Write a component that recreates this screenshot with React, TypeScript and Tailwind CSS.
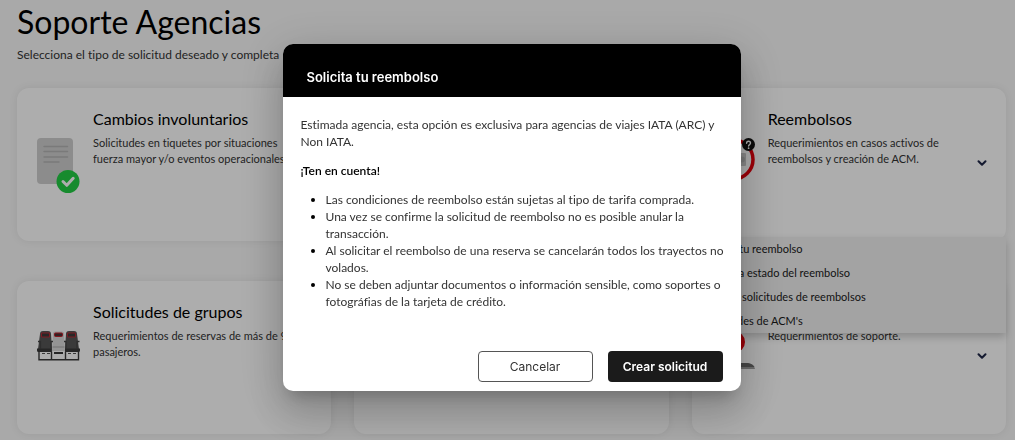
import type { ReactNode } from 'react'
import { ChevronDown } from 'lucide-react'

interface SupportCard {
  id: string
  title?: string
  text?: string
  icon?: ReactNode
  options?: string[]
  expandable?: boolean
}

function DocumentIcon() {
  return (
    <svg width="43" height="56" viewBox="0 0 43 56" fill="none" aria-hidden="true">
      <rect x="0" y="0" width="36" height="46" rx="4" fill="#cfcfcf" />
      <path
        d="M7 8.5h23.5M7 13.5h23.5M7 19h23.5M7 24h15"
        stroke="#b4b4b4"
        strokeWidth="1.5"
        strokeLinecap="round"
      />
      <circle cx="31" cy="43.5" r="11.5" fill="#23cd45" />
      <path
        d="M26 43.5l3.8 3.8 6.4-7"
        stroke="#fff"
        strokeWidth="3"
        strokeLinecap="round"
        strokeLinejoin="round"
      />
    </svg>
  )
}

function SeatsIcon() {
  return (
    <svg width="43" height="30" viewBox="0 0 43 30" fill="none" aria-hidden="true">
      <path d="M16 2.5Q16 .5 18 .5h7q2 0 2 2L28 20H15z" fill="#dadada" />
      <rect x="17.5" y="2" width="8" height="3.5" rx="1" fill="#4a3034" stroke="#c8202c" />
      <path d="M15.5 16h12" stroke="#a8a8a8" />
      <path
        d="M3 3Q3 0 6 0h5q3 0 3 3l1 15v3H1v-3zM29 3q0-3 3-3h5q3 0 3 3l2 15v3H28v-3z"
        fill="#565656"
      />
      <path
        d="M4.500 2v4h8V2zM30.500 2v4h8V2z"
        fill="#3c3c3c"
        stroke="#b82a34"
        strokeLinejoin="round"
      />
      <path
        d="M1 10.500h2.500v7M16 10.500h-2v7M27 10.500h2v7M42.500 10.500H40v7"
        stroke="#444"
        strokeWidth="1.300"
      />
      <path d="M0 17.500h14.500v3.500H1.500Q0 21 0 19.500zM28 17.500h15v2q0 1.500-1.500 1.500H28z" fill="#383838" />
      <path d="M17 22h9" stroke="#222" strokeWidth="1.800" />
      <path d="M5 22.500h8M31 22.500h8" stroke="#555" strokeDasharray="3 2" />
      <path d="M2 20.500v8.300h39.500v-8.300M14.500 20.500v8.300M28.500 20.500v8.300" stroke="#3a3a3a" strokeWidth="1.400" />
    </svg>
  )
}

function RefundIcon() {
  return (
    <svg width="43" height="44" viewBox="0 0 43 44" fill="none" aria-hidden="true">
      <circle cx="21.500" cy="21.500" r="19.500" stroke="#e8000c" strokeWidth="3.500" />
      <rect x="9" y="15" width="25" height="13" rx="1" fill="#c9c9c9" />
      <circle cx="30" cy="21.500" r="3" fill="#b4b4b4" />
      <circle cx="36.500" cy="6.500" r="6.500" fill="#111" />
      <path
        d="M34.600 5.200c0-2.600 3.900-2.500 3.900-.1 0 1.500-1.900 1.500-1.900 3"
        stroke="#fff"
        strokeWidth="1.400"
        strokeLinecap="round"
      />
      <circle cx="36.600" cy="10.200" r=".9" fill="#fff" />
    </svg>
  )
}

function MonitorIcon() {
  return (
    <svg width="43" height="38" viewBox="0 0 43 38" fill="none" aria-hidden="true">
      <circle cx="22.500" cy="11" r="10.500" fill="#e8000c" />
      <path d="M3 32h33q6 1 7 6H0q0-5 3-6z" fill="#a0a0a0" />
      <path d="M3 32h33q5 1 6.500 4H1q0-3 2-4z" fill="#6a6a6a" />
    </svg>
  )
}

const cards: SupportCard[] = [
  {
    id: 'cambios',
    title: 'Cambios involuntarios',
    text: 'Solicitudes en tiquetes por situaciones\nfuerza mayor y/o eventos operacionales.',
    icon: <DocumentIcon />,
  },
  { id: 'empty-top' },
  {
    id: 'reembolsos',
    title: 'Reembolsos',
    text: 'Requerimientos en casos activos de\nreembolsos y creación de ACM.',
    icon: <RefundIcon />,
    expandable: true,
    options: [
      'Solicita tu reembolso',
      'Consulta estado del reembolso',
      'Gestión solicitudes de reembolsos',
      "Solicitudes de ACM's",
    ],
  },
  {
    id: 'grupos',
    title: 'Solicitudes de grupos',
    text: 'Requerimientos de reservas de más de 9\npasajeros.',
    icon: <SeatsIcon />,
  },
  { id: 'empty-bottom' },
  {
    id: 'soporte',
    text: 'Requerimientos de soporte.',
    icon: <MonitorIcon />,
    expandable: true,
  },
]

const conditions = [
  'Las condiciones de reembolso están sujetas al tipo de tarifa comprada.',
  'Una vez se confirme la solicitud de reembolso no es posible anular la transacción.',
  'Al solicitar el reembolso de una reserva se cancelarán todos los trayectos no volados.',
  'No se deben adjuntar documentos o información sensible, como soportes o fotográfias de la tarjeta de crédito.',
]

function Card({ card }: { card: SupportCard }) {
  return (
    <section className="relative flex min-h-[153px] rounded-xl bg-white px-5 shadow-[0_0_8px_rgba(0,0,0,0.08)]">
      {card.icon && <div className="w-[43px] shrink-0 pt-[50px]">{card.icon}</div>}
      {card.text && (
        <div className="ml-[13px] pt-[19px] whitespace-nowrap">
          <h2 className="h-6 text-[16px] leading-6 text-black">{card.title}</h2>
          <p className="mt-1 text-[11px] leading-4 whitespace-pre text-[#333]">{card.text}</p>
        </div>
      )}
      {card.expandable && (
        <button
          type="button"
          aria-label="Ver opciones"
          className="-mr-[3px] ml-auto self-center pb-1 text-[#1f2747]"
        >
          <ChevronDown size={14} strokeWidth={3.5} />
        </button>
      )}
      {card.options && (
        <ul className="absolute inset-x-0 top-full z-10 -mt-1 bg-[#f0f0f0] shadow-[0_4px_8px_rgba(0,0,0,0.2)]">
          {card.options.map((option) => (
            <li key={option}>
              <a href="#" className="block px-2.5 text-[11px] leading-6 text-[#1a1a1a]">
                {option}
              </a>
            </li>
          ))}
        </ul>
      )}
    </section>
  )
}

function RefundDialog() {
  return (
    <div className="fixed inset-0 z-20 flex items-center justify-center bg-black/32 pb-[5px] pl-2">
      <div
        role="dialog"
        aria-modal="true"
        aria-labelledby="refund-title"
        className="w-full max-w-[458px] overflow-hidden rounded-[10px] bg-white text-[#333] shadow-[0_11px_15px_-7px_rgba(0,0,0,0.2),0_24px_38px_3px_rgba(0,0,0,0.14),0_9px_46px_8px_rgba(0,0,0,0.12)]"
      >
        <header className="bg-black px-6 pt-[23px] pb-[10px]">
          <h2
            id="refund-title"
            className="font-[Inter,sans-serif] text-[13px] leading-5 font-semibold text-white"
          >
            Solicita tu reembolso
          </h2>
        </header>
        <div className="pt-[19px] pr-2 pl-[18px] text-[12px] leading-[17px]">
          <p>
            Estimada agencia, esta opción es exclusiva para agencias de viajes IATA (ARC) y Non
            IATA.
          </p>
          <p className="mt-3 font-semibold text-black">¡Ten en cuenta!</p>
          <ul className="mt-3 list-disc pl-[25px] marker:text-black">
            {conditions.map((item) => (
              <li key={item}>{item}</li>
            ))}
          </ul>
        </div>
        <footer className="flex justify-end gap-[15px] px-[18px] pt-[41px] pb-[9px] font-[Inter,sans-serif] text-[12px]">
          <button
            type="button"
            className="h-[31px] w-[115px] rounded border border-[#555] bg-white text-[#333]"
          >
            Cancelar
          </button>
          <button
            type="button"
            className="h-[31px] w-[115px] rounded bg-[#1b1b1b] font-semibold text-white"
          >
            Crear solicitud
          </button>
        </footer>
      </div>
    </div>
  )
}

export default function App() {
  return (
    <div className="h-screen overflow-hidden bg-[#f9f9f9] font-[Lato,sans-serif] [font-variant-ligatures:none]">
      <main className="pt-1 pr-[9px] pb-4 pl-[17px]">
        <h1 className="text-[32px] leading-9 text-black">Soporte Agencias</h1>
        <p className="mt-[5px] text-[12px] leading-5 text-[#333]">
          Selecciona el tipo de solicitud deseado y completa
        </p>
        <div className="mt-[23px] grid grid-cols-3 gap-x-[23px] gap-y-10">
          {cards.map((card) => (
            <Card key={card.id} card={card} />
          ))}
        </div>
      </main>
      <RefundDialog />
    </div>
  )
}
